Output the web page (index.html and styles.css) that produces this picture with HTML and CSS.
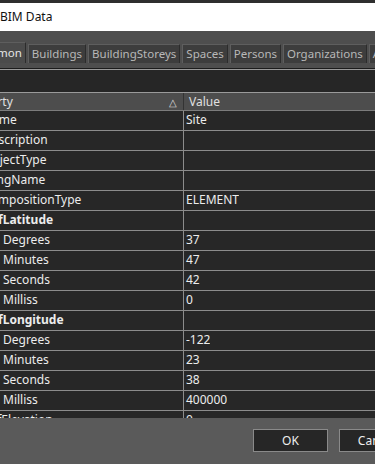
FILE: index.html
```html
<!DOCTYPE html>
<html lang="en">
<head>
  <meta charset="UTF-8">
  <title>BIM Data</title>
  <link rel="stylesheet" href="styles.css">
</head>
<body>

<div class="window">
  <div class="titlebar">BIM Data</div>

  <div class="dialog">
    <div class="tabs">
      <div class="tab active">Common</div>
      <div class="tab">Buildings</div>
      <div class="tab">BuildingStoreys</div>
      <div class="tab">Spaces</div>
      <div class="tab">Persons</div>
      <div class="tab">Organizations</div>
      <div class="tab">Addresses</div>
    </div>

    <div class="panel">
      <div class="toolbar"></div>
      <div class="grid">
        <div class="row head">
          <div class="cell name"><span class="caption">Property</span><span class="sort">&#9651;</span></div>
          <div class="cell">Value</div>
        </div>
        <div class="row"><div class="cell name">Name</div><div class="cell">Site</div></div>
        <div class="row"><div class="cell name">Description</div><div class="cell"></div></div>
        <div class="row"><div class="cell name">ObjectType</div><div class="cell"></div></div>
        <div class="row"><div class="cell name">LongName</div><div class="cell"></div></div>
        <div class="row"><div class="cell name">CompositionType</div><div class="cell">ELEMENT</div></div>
        <div class="row"><div class="cell name group">RefLatitude</div><div class="cell"></div></div>
        <div class="row"><div class="cell name sub">Degrees</div><div class="cell">37</div></div>
        <div class="row"><div class="cell name sub">Minutes</div><div class="cell">47</div></div>
        <div class="row"><div class="cell name sub">Seconds</div><div class="cell">42</div></div>
        <div class="row"><div class="cell name sub">Milliss</div><div class="cell">0</div></div>
        <div class="row"><div class="cell name group">RefLongitude</div><div class="cell"></div></div>
        <div class="row"><div class="cell name sub">Degrees</div><div class="cell">-122</div></div>
        <div class="row"><div class="cell name sub">Minutes</div><div class="cell">23</div></div>
        <div class="row"><div class="cell name sub">Seconds</div><div class="cell">38</div></div>
        <div class="row"><div class="cell name sub">Milliss</div><div class="cell">400000</div></div>
        <div class="row"><div class="cell name">RefElevation</div><div class="cell">0</div></div>
      </div>
    </div>

    <div class="buttons">
      <button class="btn">OK</button>
      <button class="btn">Cancel</button>
    </div>
  </div>
</div>

</body>
</html>
```

FILE: styles.css
```css
body {
  margin: 0;
  background: #505050;
  font-family: "Noto Sans", "Open Sans", sans-serif;
  font-size: 12px;
  overflow: hidden;
}

.window {
  width: 440px;
  margin-left: -19px;
}

.titlebar {
  height: 28px;
  border-top: 3px solid #2e2e2e;
  background: #fff;
  color: #111;
  padding-left: 19px;
  line-height: 28px;
}

.dialog {
  background: #4e4e4e;
  padding-top: 11px;
}

.tabs {
  display: flex;
  align-items: flex-end;
  height: 21px;
  margin-left: -13px;
}

.tab {
  height: 19px;
  line-height: 18px;
  padding: 0 3px;
  margin-right: 2px;
  background: #3d3d3d;
  color: #b8b8b8;
  font-size: 11.5px;
  border-top: 1px solid #5e5e5e;
  border-left: 1px solid #5e5e5e;
  border-right: 1px solid #2c2c2c;
  box-sizing: border-box;
  white-space: nowrap;
}

.tab.active {
  height: 21px;
  line-height: 20px;
  background: #4b4b4b;
  color: #e6e6e6;
}

.panel {
  margin-top: 5px;
  border-top: 1px solid #1c1c1c;
}

.toolbar {
  height: 22px;
  background: #262626;
  border-top: 1px solid #9a9a9a;
  border-bottom: 1px solid #9a9a9a;
}

.grid {
  height: 325px;
  overflow: hidden;
  background: #272727;
}

.row {
  display: flex;
  height: 20px;
  border-bottom: 1px solid #8c8c8c;
  box-sizing: border-box;
  color: #ececec;
}

.row.head {
  height: 18px;
  background: #4d4d4d;
  border-bottom: 1px solid #7c7c7c;
  color: #e0e0e0;
}

.cell {
  box-sizing: border-box;
  line-height: 18px;
  padding-left: 2px;
  white-space: nowrap;
  overflow: hidden;
}

.cell.name {
  width: 203px;
  flex: none;
  border-right: 1px solid #8c8c8c;
  position: relative;
}

.row.head .cell.name {
  border-right-color: #333;
}

.row.head .cell {
  padding-left: 5px;
}

.caption {
  margin-left: -22px;
}

.sort {
  position: absolute;
  right: 6px;
  top: 0;
  font-size: 10px;
  color: #ddd;
}

.cell.group {
  font-weight: bold;
}

.cell.sub {
  padding-left: 22px;
}

.buttons {
  display: flex;
  gap: 11px;
  padding: 11px 0 12px 272px;
  background: #5a5a5a;
}

.btn {
  width: 75px;
  height: 23px;
  background: #262626;
  border: 1px solid #8a8a8a;
  color: #eee;
  font-family: inherit;
  font-size: 12px;
  padding: 0;
}
```
